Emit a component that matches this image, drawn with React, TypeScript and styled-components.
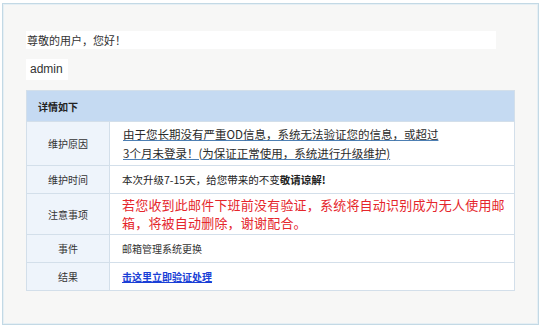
import React from "react";
import styled, { createGlobalStyle } from "styled-components";

const Global = createGlobalStyle`
  html, body { margin: 0; padding: 0; background: #ffffff; }
  body { font-family: "Noto Sans CJK SC", "Liberation Sans", sans-serif; }
`;

const Frame = styled.div`
  box-sizing: border-box;
  margin: 3px 0 0 2px;
  width: 537px;
  height: 322px;
  border: 1px solid #c3d9e5;
  box-shadow: inset 0 0 0 1px #e6eff4;
  background: #f7f7f6;
  padding: 27px 23px 0 23px;
`;

const Greeting = styled.div`
  width: 470px;
  height: 18px;
  background: #ffffff;
  font-size: 11px;
  line-height: 18px;
  color: #333;
  padding-left: 1px;
  box-sizing: border-box;
`;

const UserName = styled.div`
  display: inline-block;
  margin-top: 10px;
  background: #ffffff;
  height: 21px;
  padding: 0 5px 0 4px;
  font-family: "Liberation Sans", "Noto Sans CJK SC", sans-serif;
  font-size: 12px;
  line-height: 21px;
  color: #333;
`;

const Table = styled.table`
  margin-top: 10px;
  width: 489px;
  border-collapse: collapse;
  border: 1px solid #d3dfea;
  background: #ffffff;
`;

const HeadCell = styled.th`
  height: 30px;
  padding: 0 0 0 11px;
  background: #c5daf2;
  text-align: left;
  font-size: 10px;
  font-weight: bold;
  color: #222;
  border-bottom: 1px solid #d3dfea;
`;

const Label = styled.td<{ $h: number }>`
  width: 83px;
  height: ${(p) => p.$h}px;
  box-sizing: border-box;
  padding: 0;
  background: #eef4fb;
  text-align: center;
  font-size: 10px;
  color: #333;
  border-bottom: 1px solid #d3dfea;
  border-right: 1px solid #d3dfea;
`;

const Value = styled.td`
  padding: 0 0 0 12px;
  font-size: 10.5px;
  color: #222;
  border-bottom: 1px solid #d3dfea;
`;

const Reason = styled.span`
  display: block;
  font-size: 11.5px;
  line-height: 19px;
  color: #2a2a2a;
  text-decoration: underline;
  text-decoration-color: #4d7fb3;
  padding-left: 1px;
`;

const Strong = styled.b`
  font-weight: bold;
`;

const Warning = styled.div`
  font-size: 13px;
  line-height: 18px;
  color: #e5262c;
  letter-spacing: 0.2px;
`;

const Small = styled.span`
  font-size: 10px;
  color: #333;
`;

const Link = styled.a`
  font-size: 10px;
  font-weight: bold;
  color: #1a3fd6;
  text-decoration: underline;
`;

export default function App() {
  return (
    <>
      <Global />
      <Frame>
        <Greeting>尊敬的用户，您好！</Greeting>
        <UserName>admin</UserName>
        <Table>
          <thead>
            <tr>
              <HeadCell colSpan={2}>详情如下</HeadCell>
            </tr>
          </thead>
          <tbody>
            <tr>
              <Label $h={44}>维护原因</Label>
              <Value>
                <Reason>
                  由于您长期没有严重OD信息，系统无法验证您的信息，或超过
                  <br />
                  3个月未登录！(为保证正常使用，系统进行升级维护)
                </Reason>
              </Value>
            </tr>
            <tr>
              <Label $h={28}>维护时间</Label>
              <Value>
                本次升级7-15天，给您带来的不变<Strong>敬请谅解!</Strong>
              </Value>
            </tr>
            <tr>
              <Label $h={41}>注意事项</Label>
              <Value>
                <Warning>
                  若您收到此邮件下班前没有验证，系统将自动识别成为无人使用邮
                  <br />
                  箱，将被自动删除，谢谢配合。
                </Warning>
              </Value>
            </tr>
            <tr>
              <Label $h={28}>事件</Label>
              <Value>
                <Small>邮箱管理系统更换</Small>
              </Value>
            </tr>
            <tr>
              <Label $h={28}>结果</Label>
              <Value>
                <Link href="#">击这里立即验证处理</Link>
              </Value>
            </tr>
          </tbody>
        </Table>
      </Frame>
    </>
  );
}
